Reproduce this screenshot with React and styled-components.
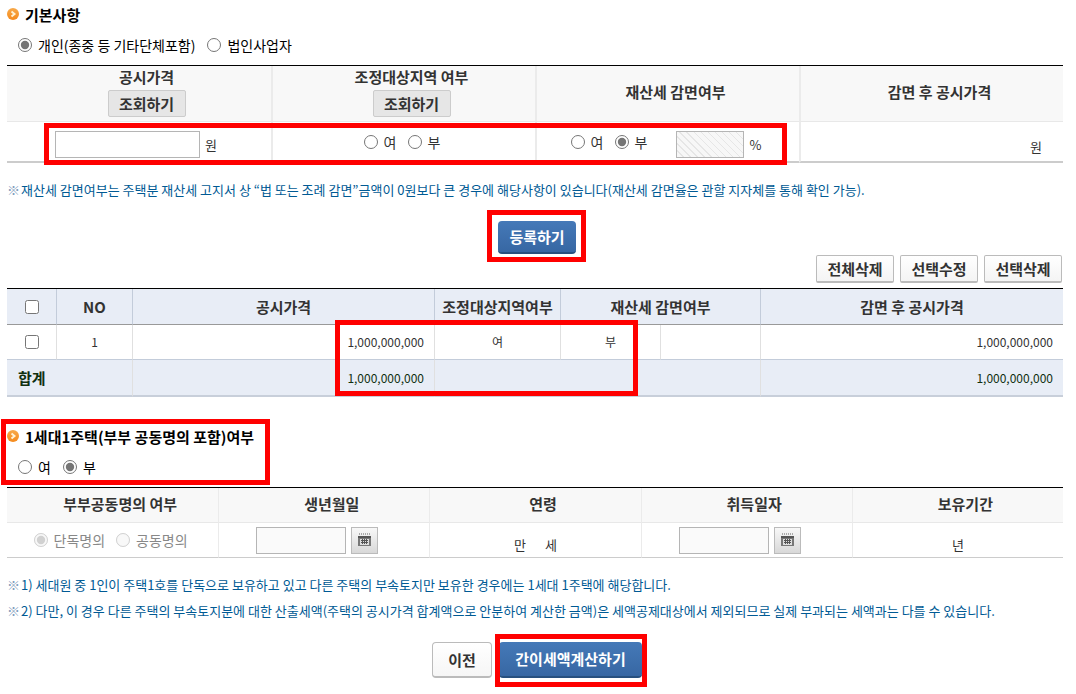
import React, { useState } from "react";
import styled, { createGlobalStyle, css } from "styled-components";

function App() {
    const [owner, setOwner] = useState("personal");
    const [area, setArea] = useState("");
    const [reduced, setReduced] = useState("no");
    const [single, setSingle] = useState("no");

    return (
        <Page>
            <CSSReset />

            <SectionTitle><Bullet />기본사항</SectionTitle>
            <Choices>
                <Radio name="owner" value="personal" current={owner} onPick={setOwner}>개인(종중 등 기타단체포함)</Radio>
                <Radio name="owner" value="company" current={owner} onPick={setOwner}>법인사업자</Radio>
            </Choices>

            <Table.Wrapper>
                <Table.Form>
                    <thead>
                        <tr>
                            <Table.Head $h={56} $line={2}>
                                <HeadStack>공시가격<LookupButton type="button">조회하기</LookupButton></HeadStack>
                            </Table.Head>
                            <Table.Head $line={2}>
                                <HeadStack>조정대상지역 여부<LookupButton type="button">조회하기</LookupButton></HeadStack>
                            </Table.Head>
                            <Table.Head $line={2}>재산세 감면여부</Table.Head>
                            <Table.Head $line={2}>감면 후 공시가격</Table.Head>
                        </tr>
                    </thead>
                    <tbody>
                        <tr>
                            <Table.Cell $h={41} $line={2}>
                                <PriceField>
                                    <TextInput $w={145} aria-label="공시가격" />원
                                </PriceField>
                            </Table.Cell>
                            <Table.Cell $line={2}>
                                <CellChoices>
                                    <Radio name="area" value="yes" current={area} onPick={setArea}>여</Radio>
                                    <Radio name="area" value="no" current={area} onPick={setArea}>부</Radio>
                                </CellChoices>
                            </Table.Cell>
                            <Table.Cell $line={2}>
                                <RateField>
                                    <CellChoices>
                                        <Radio name="reduced" value="yes" current={reduced} onPick={setReduced}>여</Radio>
                                        <Radio name="reduced" value="no" current={reduced} onPick={setReduced}>부</Radio>
                                    </CellChoices>
                                    <Rate>
                                        <StripedInput $w={68} disabled={reduced === "no"} aria-label="감면율" />%
                                    </Rate>
                                </RateField>
                            </Table.Cell>
                            <Table.Cell $line={2}>
                                <Unit $right>원</Unit>
                            </Table.Cell>
                        </tr>
                    </tbody>
                </Table.Form>
                <PriceMark />
            </Table.Wrapper>

            <Notes>
                <Note>
                    <Mark>※</Mark>
                    재산세 감면여부는 주택분 재산세 고지서 상 “법 또는 조례 감면”금액이 0원보다 큰 경우에 해당사항이 있습니다(재산세 감면율은 관할 지자체를 통해 확인 가능).
                </Note>
            </Notes>

            <Actions>
                <Marked>
                    <PrimaryButton type="button" $w={78} $h={33}>등록하기</PrimaryButton>
                    <RegisterMark />
                </Marked>
            </Actions>

            <Tools>
                <SmallButton type="button">전체삭제</SmallButton>
                <SmallButton type="button">선택수정</SmallButton>
                <SmallButton type="button">선택삭제</SmallButton>
            </Tools>

            <Table.Wrapper>
                <Table.List>
                    <colgroup>
                        <Col $w={50} />
                        <Col $w={76} />
                        <Col />
                        <Col $w={126} />
                        <Col $w={100} />
                        <Col $w={100} />
                        <Col />
                    </colgroup>
                    <thead>
                        <tr>
                            <List.Head><Checkbox aria-label="전체 선택" /></List.Head>
                            <List.Head>NO</List.Head>
                            <List.Head>공시가격</List.Head>
                            <List.Head>조정대상지역여부</List.Head>
                            <List.Head colSpan={2}>재산세 감면여부</List.Head>
                            <List.Head>감면 후 공시가격</List.Head>
                        </tr>
                    </thead>
                    <tbody>
                        <tr>
                            <List.Cell><Checkbox aria-label="1번 선택" /></List.Cell>
                            <List.Cell>1</List.Cell>
                            <List.Cell $right>1,000,000,000</List.Cell>
                            <List.Cell>여</List.Cell>
                            <List.Cell>부</List.Cell>
                            <List.Cell />
                            <List.Cell $right>1,000,000,000</List.Cell>
                        </tr>
                    </tbody>
                    <tfoot>
                        <tr>
                            <List.TotalHead scope="row" colSpan={2}>합계</List.TotalHead>
                            <List.Total $right>1,000,000,000</List.Total>
                            <List.Total colSpan={3} />
                            <List.Total $right>1,000,000,000</List.Total>
                        </tr>
                    </tfoot>
                </Table.List>
                <ListMark />
            </Table.Wrapper>

            <SingleHome>
                <SectionTitle><Bullet />1세대1주택(부부 공동명의 포함)여부</SectionTitle>
                <Choices>
                    <Radio name="single" value="yes" current={single} onPick={setSingle}>여</Radio>
                    <Radio name="single" value="no" current={single} onPick={setSingle}>부</Radio>
                </Choices>
                <SingleMark />
            </SingleHome>

            <Table.Form>
                <thead>
                    <tr>
                        <Table.Head $h={35}>부부공동명의 여부</Table.Head>
                        <Table.Head>생년월일</Table.Head>
                        <Table.Head>연령</Table.Head>
                        <Table.Head>취득일자</Table.Head>
                        <Table.Head>보유기간</Table.Head>
                    </tr>
                </thead>
                <tbody>
                    <tr>
                        <Table.Cell $h={35}>
                            <CellChoices>
                                <Radio name="joint" value="sole" current="sole" disabled>단독명의</Radio>
                                <Radio name="joint" value="joint" current="sole" disabled>공동명의</Radio>
                            </CellChoices>
                        </Table.Cell>
                        <Table.Cell><DateField label="생년월일" /></Table.Cell>
                        <Table.Cell><Unit><span>만</span><span>세</span></Unit></Table.Cell>
                        <Table.Cell><DateField label="취득일자" /></Table.Cell>
                        <Table.Cell><Unit>년</Unit></Table.Cell>
                    </tr>
                </tbody>
            </Table.Form>

            <Notes>
                <Note>
                    <Mark>※</Mark>
                    1) 세대원 중 1인이 주택1호를 단독으로 보유하고 있고 다른 주택의 부속토지만 보유한 경우에는 1세대 1주택에 해당합니다.
                </Note>
                <Note>
                    <Mark>※</Mark>
                    2) 다만, 이 경우 다른 주택의 부속토지분에 대한 산출세액(주택의 공시가격 합계액으로 안분하여 계산한 금액)은 세액공제대상에서 제외되므로 실제 부과되는 세액과는 다를 수 있습니다.
                </Note>
            </Notes>

            <Actions>
                <BackButton type="button">이전</BackButton>
                <Marked>
                    <PrimaryButton type="button" $w={143} $h={36}>간이세액계산하기</PrimaryButton>
                    <CalcMark />
                </Marked>
            </Actions>
        </Page>
    );
}

function Radio({ name, value, current, onPick, disabled, children }) {
    return (
        <RadioLabel $disabled={disabled}>
            <RadioInput
                type="radio"
                name={name}
                value={value}
                checked={current === value}
                disabled={disabled}
                onChange={() => onPick && onPick(value)}
            />
            {children}
        </RadioLabel>
    );
}

function DateField({ label }) {
    return (
        <DateWrapper>
            <TextInput $w={90} disabled aria-label={label} />
            <CalendarButton type="button" aria-label={label + " 달력"}>
                <svg width="13" height="14" viewBox="0 0 13 14" shapeRendering="crispEdges">
                    <path d="M1 0h1v2H1zM3 0h1v2H3zM5 0h1v2H5zM7 0h1v2H7zM9 0h1v2H9zM11 0h1v2h-1z" fill="#aaa" />
                    <path d="M0 3h13v10H0z" fill="#777" />
                    <path d="M0 3h13v2H0z" fill="#555" />
                    <path d="M2 6h9v6H2z" fill="#ddd" />
                    <path d="M4 6h1v5H4zM6 6h1v5H6zM8 6h1v5H8zM3 7h7v1H3zM3 9h7v1H3z" fill="#555" />
                </svg>
            </CalendarButton>
        </DateWrapper>
    );
}

function Bullet() {
    return (
        <svg width="12" height="12" viewBox="0 0 12 12" aria-hidden="true">
            <defs>
                <linearGradient id="bullet" x1="0" y1="0" x2="0" y2="1">
                    <stop offset="0" stopColor="#f7a94a" />
                    <stop offset="1" stopColor="#f58a1c" />
                </linearGradient>
            </defs>
            <circle cx="6" cy="6" r="6" fill="url(#bullet)" />
            <path d="M4.5 3.5L7.5 6L4.5 8.5" fill="none" stroke="#fff3d6" strokeWidth="2" />
        </svg>
    );
}

const CSSReset = createGlobalStyle`
    *,
    *::before,
    *::after {
        margin: 0;
        padding: 0;
        box-sizing: border-box;
    }

    body {
        background-color: white;
        color: #333;
        font-family: "Noto Sans CJK KR", sans-serif;
        font-size: 13px;
        line-height: 20px;
    }

    button, input {
        font: inherit;
        color: inherit;
    }
`;

const Page = styled.main`
    padding: 0 13px 16px 7px;
`;

const SectionTitle = styled.h2`
    display: flex;
    align-items: center;
    gap: 6px;
    height: 30px;
    color: black;
    font-size: 15px;
    font-weight: bold;

    svg {
        margin-bottom: 2px;
    }
`;

const Choices = styled.div`
    display: flex;
    align-items: center;
    gap: 12px;
    height: 30px;
    margin-bottom: 5px;
    padding-left: 11px;
    color: black;
`;

const CellChoices = styled.div`
    display: flex;
    justify-content: center;
    gap: 11px;
    padding-right: 4px;
`;

const RadioLabel = styled.label`
    display: flex;
    align-items: center;
    gap: 6px;
    font-size: 14px;
    color: ${(props) => (props.$disabled ? "#888" : "inherit")};
`;

const RadioInput = styled.input`
    width: 14px;
    height: 14px;
    accent-color: #757575;
`;

const Checkbox = styled.input.attrs({ type: "checkbox" })`
    display: block;
    width: 14px;
    height: 14px;
    margin: 0 auto;
`;

const Table = {
    Wrapper: styled.div`
        position: relative;
    `,

    Form: styled.table`
        width: 100%;
        table-layout: fixed;
        border-spacing: 0;
        border-top: 1px solid black;
    `,

    List: styled.table`
        width: 100%;
        table-layout: fixed;
        border-spacing: 0;
        border-top: 1px solid black;
    `,

    Head: styled.th`
        height: ${(props) => (props.$h ? props.$h + "px" : "auto")};
        padding: 0 0 3px 15px;
        background-color: #f8f8f8;
        border-bottom: 1px solid #e8e8e8;
        border-left: ${(props) => props.$line || 1}px solid #ebebeb;
        font-size: 15px;

        &:first-child {
            border-left: 0;
        }
    `,

    Cell: styled.td`
        height: ${(props) => (props.$h ? props.$h + "px" : "auto")};
        border-bottom: ${(props) => props.$line || 1}px solid #ccc;
        border-left: ${(props) => props.$line || 1}px solid #ebebeb;

        &:first-child {
            border-left: 0;
        }
    `,
};

const Col = styled.col`
    width: ${(props) => (props.$w ? props.$w + "px" : "auto")};
`;

const totalStyle = css`
    height: 37px;
    background-color: #e8edf6;
    border-right: 1px solid #e0e0e0;
    border-bottom: 2px solid #c8cfda;
    color: #103010;

    &:last-child {
        border-right: 0;
    }
`;

const List = {
    Head: styled.th`
        height: 36px;
        background-color: #e8edf6;
        border-right: 1px solid #c3ccda;
        border-bottom: 1px solid #999;
        font-size: 15px;
        white-space: nowrap;

        &:last-child {
            border-right: 0;
        }
    `,

    Cell: styled.td`
        height: 35px;
        padding-right: ${(props) => (props.$right ? 10 : 0)}px;
        border-right: 1px solid #e0e0e0;
        border-bottom: 1px solid #c3ccda;
        font-size: 12px;
        text-align: ${(props) => (props.$right ? "right" : "center")};

        &:last-child {
            border-right: 0;
        }
    `,

    TotalHead: styled.th`
        ${totalStyle}
        padding-left: 11px;
        font-size: 15px;
        text-align: left;
    `,

    Total: styled.td`
        ${totalStyle}
        padding-right: 10px;
        font-size: 12px;
        text-align: right;
    `,
};

const HeadStack = styled.div`
    display: flex;
    flex-direction: column;
    align-items: center;
    gap: 3px;
`;

const LookupButton = styled.button`
    width: 78px;
    height: 27px;
    background-color: #e6e6e6;
    border: 1px solid #ccc;
    border-radius: 2px;
    font-size: 15px;
    font-weight: bold;
`;

const TextInput = styled.input`
    width: ${(props) => props.$w}px;
    height: 27px;
    padding: 0 5px;
    background-color: white;
    border: 1px solid #b5b5b5;

    &:disabled {
        background-color: #fafafa;
    }
`;

const StripedInput = styled(TextInput)`
    &:disabled {
        background: repeating-linear-gradient(45deg, #f7f7f7 0 4px, #e6e6e6 4px 5px);
    }
`;

const PriceField = styled.div`
    display: flex;
    align-items: center;
    gap: 5px;
    padding-top: 6px;
    padding-left: 48px;
`;

const RateField = styled.div`
    display: flex;
    align-items: center;
    justify-content: center;
    gap: 25px;
    padding-right: 4px;
`;

const Rate = styled.div`
    display: flex;
    align-items: center;
    gap: 5px;
    padding-top: 6px;
`;

const Unit = styled.div`
    display: flex;
    justify-content: ${(props) => (props.$right ? "flex-end" : "center")};
    gap: 19px;
    padding-top: 10px;
    padding-right: ${(props) => (props.$right ? 21 : 0)}px;
`;

const DateWrapper = styled.div`
    display: flex;
    justify-content: center;
    gap: 5px;
    padding-right: 14px;
`;

const CalendarButton = styled.button`
    display: flex;
    align-items: center;
    justify-content: center;
    width: 27px;
    height: 27px;
    background: linear-gradient(#f8f8f8, #d8d8d8);
    border: 1px solid #bbb;
`;

const Notes = styled.ul`
    margin: 14px 0 18px;
    list-style: none;
`;

const Note = styled.li`
    display: flex;
    align-items: center;
    height: 26px;
    color: #005a94;
    white-space: nowrap;
`;

const Mark = styled.span`
    width: 14px;
    color: #7f9dbd;
    font-size: 13px;
`;

const Actions = styled.div`
    display: flex;
    justify-content: center;
    gap: 7px;
    padding-left: 4px;
`;

const Marked = styled.div`
    position: relative;
`;

const PrimaryButton = styled.button`
    display: block;
    width: ${(props) => props.$w}px;
    height: ${(props) => props.$h}px;
    background: linear-gradient(#4579b8, #3767a3);
    border: 0;
    border-bottom: 2px solid #27507f;
    border-radius: 4px;
    color: white;
    font-size: 15px;
    font-weight: bold;
`;

const BackButton = styled.button`
    width: 60px;
    height: 36px;
    background: linear-gradient(#fff, #f6f6f6);
    border: 1px solid #bbb;
    border-bottom-width: 2px;
    border-radius: 4px;
    font-size: 15px;
    font-weight: bold;
`;

const Tools = styled.div`
    display: flex;
    justify-content: flex-end;
    gap: 6px;
    margin: 1px 1px 5px 0;
`;

const SmallButton = styled.button`
    width: 78px;
    height: 28px;
    background: linear-gradient(#fff, #f4f4f4);
    border: 1px solid #bbb;
    border-bottom-width: 2px;
    border-radius: 2px;
    font-size: 15px;
    font-weight: bold;
`;

const SingleHome = styled.section`
    position: relative;
    margin-top: 25px;
`;

const Frame = styled.span`
    position: absolute;
    border: 5px solid #ff0000;
    pointer-events: none;
`;

const PriceMark = styled(Frame)`
    top: 58px;
    left: 37px;
    right: 276px;
    height: 42px;
`;

const RegisterMark = styled(Frame)`
    inset: -11px -10px -8px -11px;
`;

const ListMark = styled(Frame)`
    top: 32px;
    left: 328px;
    right: 425px;
    height: 76px;
`;

const SingleMark = styled(Frame)`
    top: -3px;
    left: -6px;
    width: 269px;
    height: 66px;
`;

const CalcMark = styled(Frame)`
    inset: -8px -5px -9px -4px;
`;

export default App;
